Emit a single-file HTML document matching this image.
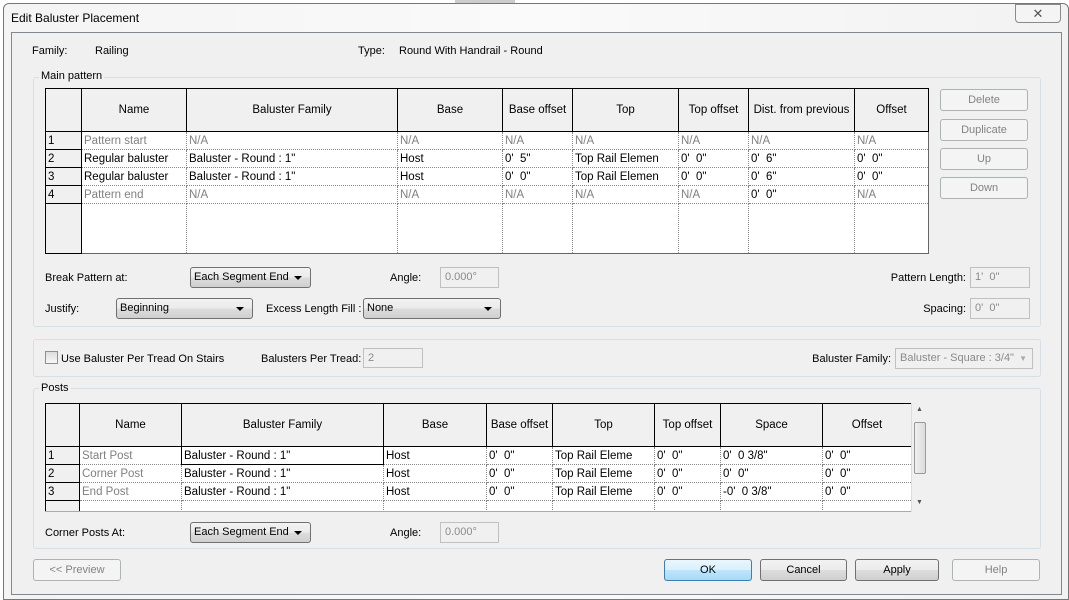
<!DOCTYPE html>
<html><head><style>
*{box-sizing:border-box;margin:0;padding:0}
body{width:1069px;height:600px;background:#fff;font-family:"Liberation Sans",sans-serif;font-size:11px;color:#000;position:relative;overflow:hidden}
.a{position:absolute}
.win{left:3px;top:3px;width:1066px;height:597px;border:1px solid #777;border-radius:6px 6px 0 0;background:linear-gradient(90deg,#f4f4f4,#fafafa 50%,#f2f2f2)}
.client{left:11px;top:32px;width:1051px;height:563px;background:#f0f0f0;border:1px solid #828790}
.grp{border:1px solid #d5dfe5;border-radius:3px}
.glabel{background:#f0f0f0;padding:0 2px}
.lbl{white-space:nowrap;line-height:14px}
.btn{border:1px solid #707070;border-radius:3px;background:linear-gradient(#f2f2f2,#ebebeb 50%,#dddddd 51%,#cfcfcf);text-align:center;line-height:20px}
.dis{border-color:#adb2b5;background:#f4f4f4;color:#838383}
.inp{border:1px solid #c0c0c0;background:#f0f0f0;color:#8a8a8a;padding-left:4px;line-height:19px;white-space:nowrap;overflow:hidden}
.sel{border:1px solid #707070;border-radius:3px;background:linear-gradient(#f2f2f2,#ebebeb 50%,#dddddd 51%,#cfcfcf);padding-left:3px;line-height:19px;white-space:nowrap}
.sel:after{content:"";position:absolute;right:8px;top:8px;border:4px solid transparent;border-top:4px solid #000;border-bottom:0}
table{border-collapse:collapse;table-layout:fixed;position:absolute;background:#fff}
td{height:18px;border:1px dotted #888;white-space:nowrap;overflow:hidden;padding-left:2px;line-height:16px;font-size:11.5px}
th{height:43px;border:1px solid #000;font-weight:normal;background:#f0f0f0;font-size:11.5px;white-space:nowrap;overflow:hidden}
td.n{border:1px solid #000;background:#f0f0f0;padding-left:2px}
.g{color:#808080}
</style></head><body>
<div class="a" style="left:455px;top:0;width:60px;height:4px;background:#ccc"></div>
<div class="a win"></div>
<div class="a lbl" style="left:11px;top:11px;font-size:12px">Edit Baluster Placement</div>
<div class="a" style="left:1015px;top:4px;width:46px;height:19px;border:1px solid #8a8a8a;border-radius:0 0 4px 4px;background:#f4f4f4;text-align:center;line-height:17px;color:#555;font-size:13px">✕</div>
<div class="a client"></div>

<div class="a lbl" style="left:32px;top:44px">Family:</div>
<div class="a lbl" style="left:95px;top:44px">Railing</div>
<div class="a lbl" style="left:358px;top:44px">Type:</div>
<div class="a lbl" style="left:399px;top:44px">Round With Handrail - Round</div>

<div class="a grp" style="left:33px;top:77px;width:1008px;height:250px"></div>
<div class="a lbl glabel" style="left:39px;top:69px">Main pattern</div>

<table style="left:45px;top:88px;width:883px;border:1px solid #666">
<colgroup><col style="width:36px"><col style="width:105px"><col style="width:211px"><col style="width:105px"><col style="width:70px"><col style="width:106px"><col style="width:70px"><col style="width:106px"><col style="width:74px"></colgroup>
<tr><th></th><th>Name</th><th>Baluster Family</th><th>Base</th><th>Base offset</th><th>Top</th><th>Top offset</th><th>Dist. from previous</th><th>Offset</th></tr>
<tr><td class="n">1</td><td class="g">Pattern start</td><td class="g">N/A</td><td class="g">N/A</td><td class="g">N/A</td><td class="g">N/A</td><td class="g">N/A</td><td class="g">N/A</td><td class="g">N/A</td></tr>
<tr><td class="n">2</td><td>Regular baluster</td><td>Baluster - Round : 1"</td><td>Host</td><td>0'&nbsp; 5"</td><td>Top Rail Elemen</td><td>0'&nbsp; 0"</td><td>0'&nbsp; 6"</td><td>0'&nbsp; 0"</td></tr>
<tr><td class="n">3</td><td>Regular baluster</td><td>Baluster - Round : 1"</td><td>Host</td><td>0'&nbsp; 0"</td><td>Top Rail Elemen</td><td>0'&nbsp; 0"</td><td>0'&nbsp; 6"</td><td>0'&nbsp; 0"</td></tr>
<tr><td class="n">4</td><td class="g">Pattern end</td><td class="g">N/A</td><td class="g">N/A</td><td class="g">N/A</td><td class="g">N/A</td><td class="g">N/A</td><td>0'&nbsp; 0"</td><td class="g">N/A</td></tr>
<tr><td class="n" style="height:50px"></td><td style="height:50px"></td><td></td><td></td><td></td><td></td><td></td><td></td><td></td></tr>
</table>

<div class="a btn dis" style="left:940px;top:89px;width:88px;height:22px">Delete</div>
<div class="a btn dis" style="left:940px;top:119px;width:88px;height:22px">Duplicate</div>
<div class="a btn dis" style="left:940px;top:148px;width:88px;height:22px">Up</div>
<div class="a btn dis" style="left:940px;top:177px;width:88px;height:22px">Down</div>

<div class="a lbl" style="left:45px;top:271px">Break Pattern at:</div>
<div class="a sel" style="left:190px;top:267px;width:121px;height:21px">Each Segment End</div>
<div class="a lbl" style="left:390px;top:271px">Angle:</div>
<div class="a inp" style="left:440px;top:267px;width:59px;height:21px">0.000°</div>
<div class="a lbl" style="left:966px;top:271px;transform:translateX(-100%)">Pattern Length:</div>
<div class="a inp" style="left:970px;top:267px;width:60px;height:21px">1'&nbsp; 0"</div>

<div class="a lbl" style="left:45px;top:302px">Justify:</div>
<div class="a sel" style="left:116px;top:298px;width:137px;height:21px">Beginning</div>
<div class="a lbl" style="left:266px;top:302px">Excess Length Fill :</div>
<div class="a sel" style="left:363px;top:298px;width:138px;height:21px">None</div>
<div class="a lbl" style="left:966px;top:302px;transform:translateX(-100%)">Spacing:</div>
<div class="a inp" style="left:970px;top:298px;width:60px;height:21px">0'&nbsp; 0"</div>

<div class="a grp" style="left:33px;top:339px;width:1008px;height:38px"></div>
<div class="a" style="left:45px;top:351px;width:13px;height:13px;border:1px solid #8e8f8f;background:linear-gradient(#ddd,#f8f8f8)"></div>
<div class="a lbl" style="left:61px;top:352px">Use Baluster Per Tread On Stairs</div>
<div class="a lbl" style="left:261px;top:352px">Balusters Per Tread:</div>
<div class="a inp" style="left:363px;top:348px;width:60px;height:20px">2</div>
<div class="a lbl" style="left:891px;top:352px;transform:translateX(-100%)">Baluster Family:</div>
<div class="a inp" style="left:895px;top:348px;width:138px;height:21px;padding-right:14px">Baluster - Square : 3/4"<span style="position:absolute;right:5px;color:#aaa;font-size:8px">▼</span></div>

<div class="a grp" style="left:33px;top:388px;width:1008px;height:161px"></div>
<div class="a lbl glabel" style="left:39px;top:381px">Posts</div>

<div class="a" style="left:45px;top:403px;width:866px;height:108px;overflow:hidden;background:#fff">
<table style="left:0;top:0;width:866px;border:1px solid #666">
<colgroup><col style="width:34px"><col style="width:102px"><col style="width:202px"><col style="width:103px"><col style="width:66px"><col style="width:102px"><col style="width:66px"><col style="width:102px"><col style="width:89px"></colgroup>
<tr><th style="height:42px"></th><th>Name</th><th>Baluster Family</th><th>Base</th><th>Base offset</th><th>Top</th><th>Top offset</th><th>Space</th><th>Offset</th></tr>
<tr><td class="n">1</td><td class="g">Start Post</td><td style="border:1px solid #000">Baluster - Round : 1"</td><td>Host</td><td>0'&nbsp; 0"</td><td>Top Rail Eleme</td><td>0'&nbsp; 0"</td><td>0'&nbsp; 0 3/8"</td><td>0'&nbsp; 0"</td></tr>
<tr><td class="n">2</td><td class="g">Corner Post</td><td>Baluster - Round : 1"</td><td>Host</td><td>0'&nbsp; 0"</td><td>Top Rail Eleme</td><td>0'&nbsp; 0"</td><td>0'&nbsp; 0"</td><td>0'&nbsp; 0"</td></tr>
<tr><td class="n">3</td><td class="g">End Post</td><td>Baluster - Round : 1"</td><td>Host</td><td>0'&nbsp; 0"</td><td>Top Rail Eleme</td><td>0'&nbsp; 0"</td><td>-0'&nbsp; 0 3/8"</td><td>0'&nbsp; 0"</td></tr>
<tr><td class="n" style="height:30px"></td><td></td><td></td><td></td><td></td><td></td><td></td><td></td><td></td></tr>
</table>
</div>
<div class="a" style="left:45px;top:511px;width:884px;height:1px;background:#aaa"></div>
<div class="a" style="left:911px;top:403px;width:18px;height:109px;background:#f0f0f0;border-left:1px solid #ddd"></div>
<div class="a" style="left:914px;top:422px;width:12px;height:52px;border:1px solid #999;border-radius:2px;background:linear-gradient(90deg,#f0f0f0,#dcdcdc)"></div>
<div class="a" style="left:916px;top:406px;font-size:7px;color:#555">▲</div>
<div class="a" style="left:916px;top:499px;font-size:7px;color:#555">▼</div>

<div class="a lbl" style="left:45px;top:526px">Corner Posts At:</div>
<div class="a sel" style="left:190px;top:522px;width:121px;height:21px">Each Segment End</div>
<div class="a lbl" style="left:390px;top:526px">Angle:</div>
<div class="a inp" style="left:440px;top:522px;width:59px;height:21px">0.000°</div>

<div class="a btn dis" style="left:33px;top:559px;width:88px;height:22px">&lt;&lt; Preview</div>
<div class="a btn" style="left:664px;top:559px;width:88px;height:22px;border-color:#3c7fb1;background:linear-gradient(#eaf6fd,#d9f0fc 50%,#bee6fd 51%,#a7d9f5)">OK</div>
<div class="a btn" style="left:760px;top:559px;width:87px;height:22px">Cancel</div>
<div class="a btn" style="left:855px;top:559px;width:84px;height:22px">Apply</div>
<div class="a btn dis" style="left:952px;top:559px;width:88px;height:22px">Help</div>
</body></html>
